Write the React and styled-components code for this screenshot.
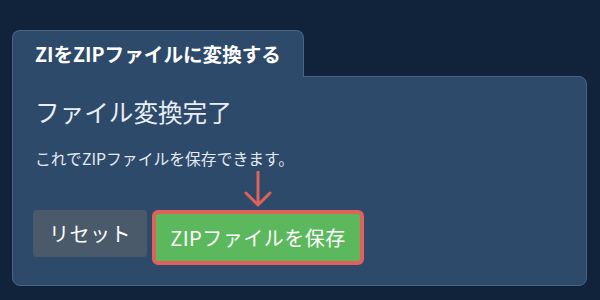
import React from "react";
import styled, { createGlobalStyle } from "styled-components";

const Global = createGlobalStyle`
  html, body { margin: 0; padding: 0; background: #11233a; }
  body { font-family: "Noto Sans CJK JP", "Noto Sans", sans-serif; }
  * { box-sizing: border-box; }
`;

const Page = styled.div`
  width: 600px;
  height: 300px;
  padding: 30px 13px 14px 12px;
  display: flex;
  flex-direction: column;
`;

const Tab = styled.div`
  align-self: flex-start;
  position: relative;
  z-index: 1;
  margin-bottom: -1px;
  height: 47px;
  padding: 0 22px 2px 22px;
  display: flex;
  align-items: center;
  background: #2d4a6a;
  border: 1px solid #4a6584;
  border-bottom: none;
  border-radius: 8px 8px 0 0;
  color: #ffffff;
  font-size: 19.6px;
  font-weight: 700;
`;

const Card = styled.div`
  flex: 1;
  background: #2d4a6a;
  border: 1px solid #4a6584;
  border-radius: 0 8px 8px 8px;
  padding: 17px 22px 20px 22px;
  display: flex;
  flex-direction: column;
`;

const Heading = styled.h2`
  margin: 0;
  font-size: 24.6px;
  font-weight: 400;
  line-height: 34px;
  color: #e9eef4;
`;

const Message = styled.p`
  margin: 20px 0 0 0;
  font-size: 15.8px;
  line-height: 22px;
  color: #e4e9f0;
`;

const Actions = styled.div`
  margin-top: 40px;
  display: flex;
  align-items: flex-start;
  gap: 5px;
  margin-left: -2px;
`;

const Button = styled.button`
  font-family: inherit;
  font-size: 20px;
  letter-spacing: 0.5px;
  line-height: 25px;
  color: #ffffff;
  cursor: pointer;
  border-radius: 5px;
`;

const ResetButton = styled(Button)`
  height: 47px;
  width: 114px;
  border: none;
  background: #4b5a6b;
  border-radius: 4px;
  padding: 0;
`;

const SaveWrap = styled.div`
  position: relative;
`;

const SaveButton = styled(Button)`
  height: 55px;
  width: 212px;
  background: #5cb85c;
  border: 4px solid #e0605a;
  border-radius: 6px;
  padding: 0;
`;

const Arrow = styled.svg`
  position: absolute;
  left: 50%;
  top: -39px;
  transform: translateX(-50%);
`;

export default function App() {
  return (
    <>
      <Global />
      <Page>
        <Tab>ZIをZIPファイルに変換する</Tab>
        <Card>
          <Heading>ファイル変換完了</Heading>
          <Message>これでZIPファイルを保存できます。</Message>
          <Actions>
            <ResetButton>リセット</ResetButton>
            <SaveWrap>
              <Arrow width="30" height="37" viewBox="0 0 30 37">
                <path
                  d="M15 1 V34 M3 22 L15 34 L27 22"
                  fill="none"
                  stroke="#e0605a"
                  strokeWidth="3"
                  strokeLinecap="round"
                  strokeLinejoin="round"
                />
              </Arrow>
              <SaveButton>ZIPファイルを保存</SaveButton>
            </SaveWrap>
          </Actions>
        </Card>
      </Page>
    </>
  );
}
